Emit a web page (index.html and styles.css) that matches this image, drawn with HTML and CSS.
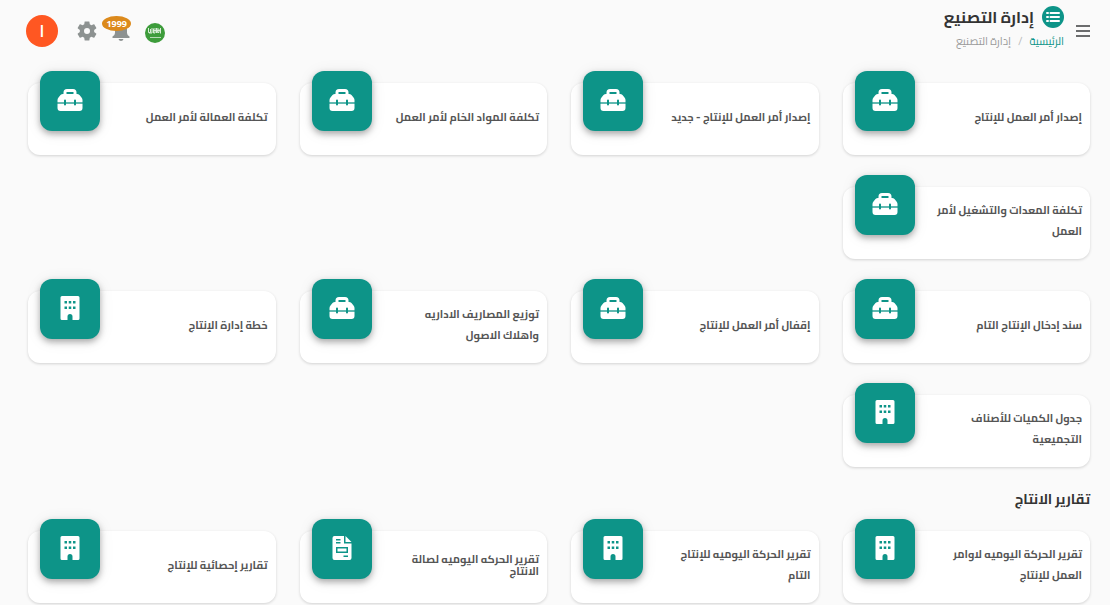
FILE: index.html
```html
<!DOCTYPE html>
<html lang="ar" dir="rtl">
<head>
    <meta charset="UTF-8">
    <meta name="viewport" content="width=device-width, initial-scale=1.0">
    <title>إدارة التصنيع</title>
    <link rel="stylesheet" href="styles.css">
</head>
<body>

<!-- shared icons -->
<svg class="sprite" aria-hidden="true">
    <symbol id="icon-toolbox" viewBox="0 0 26 24">
        <path fill="#fff" fill-rule="evenodd" d="M6.500 6V4.500Q6.500 1 10 1h6q3.500 0 3.500 3.500V6h.5q1.500 0 2.500 1l2 2.500q1 1 1 2.500v2H19v-1.500q0-1-1-1t-1 1V14H9v-1.500q0-1-1-1t-1 1V14H.5v-2q0-1.500 1-2.500l2-2.500q1-1 2.500-1zM9.500 6h7V4h-7z"/>
        <path fill="#fff" d="M.5 16H7v.5q0 1 1 1t1-1V16h8v.5q0 1 1 1t1-1V16h6.500v4q0 3-3 3h-19q-3 0-3-3z"/>
        <path fill="#fff" opacity=".35" d="M.5 14H7v2H.5zM9 14h8v2H9zM19 14h6.500v2H19z"/>
    </symbol>
    <symbol id="icon-building" viewBox="0 0 20 24">
        <path fill="#fff" fill-rule="evenodd" d="M2 0h16q1.500 0 1.500 1.500v21q0 1.500-1.500 1.500h-5.500v-3.500q0-2.500-2.500-2.500t-2.500 2.500V24H2Q.5 24 .5 22.500v-21Q.5 0 2 0zM4.500 5v2.500H7V5zm4.250 0v2.500h2.500V5zM13 5v2.500h2.500V5zM4.500 10.500V13H7v-2.500zm4.250 0V13h2.500v-2.500zm4.250 0V13h2.500v-2.500z"/>
    </symbol>
    <symbol id="icon-invoice" viewBox="0 0 20 24">
        <path fill="#fff" fill-rule="evenodd" d="M2.500 0H12v7.500h7.500V22q0 2-2 2h-15q-2 0-2-2V2q0-2 2-2zM4 3v1.500h4.500V3zm0 3v1.500h4.500V6zm0 5v6h12v-6zm1.500 1.500h9v3h-9zm6 7V21H16v-1.500z"/>
        <path fill="#fff" d="M13.500 0l6 6h-6z"/>
    </symbol>
</svg>

<header class="topbar">
    <div class="topbar-start">
        <button type="button" class="icon-button menu-button" aria-label="القائمة">
            <svg width="14" height="12" viewBox="0 0 14 12"><path d="M0 1h14M0 6h14M0 11h14" stroke="#6b6c6d" stroke-width="2"/></svg>
        </button>
        <div class="page-heading">
            <div class="title-row">
                <svg width="22" height="22" viewBox="0 0 22 22" aria-hidden="true">
                    <circle cx="11" cy="11" r="11" fill="#0d9488"/>
                    <path d="M8.500 7h8.500M8.500 11h8.500M8.500 15h8.500" stroke="#fff" stroke-width="2" stroke-linecap="round"/>
                    <path d="M5 7h1M5 11h1M5 15h1" stroke="#fff" stroke-width="2" stroke-linecap="round"/>
                </svg>
                <h1>إدارة التصنيع</h1>
            </div>
            <nav class="breadcrumb">
                <a href="#">الرئيسية</a>
                <span class="separator">/</span>
                <span>إدارة التصنيع</span>
            </nav>
        </div>
    </div>

    <div class="topbar-tools">
        <button type="button" class="icon-button flag-button" aria-label="اللغة">
            <svg width="20" height="20" viewBox="0 0 20 20">
                <circle cx="10" cy="10" r="10" fill="#3d9c3b"/>
                <path d="M3.500 5v4.500h2V6M7 5v5H4M8.500 5.500V10H10V5M11.500 5v5M13 5l-.5 4.500H14V6M15.500 5v5.500M8 7.500h7" fill="none" stroke="#d8ecd7" stroke-width="1"/>
                <path d="M5 14.500h11" stroke="#b5dab4" stroke-width="1"/>
            </svg>
        </button>
        <button type="button" class="icon-button bell-button" aria-label="الإشعارات">
            <svg width="18" height="20" viewBox="0 0 18 20">
                <path fill="#8d9291" d="M9 0q1.200 0 1.200 1.500Q15 3 15 8v4q0 2 2.500 3.500V17H.5v-1.500Q3 14 3 12V8q0-5 4.800-6.500Q7.800 0 9 0zM6.500 18h5q-.5 2-2.500 2t-2.500-2z"/>
            </svg>
            <span class="badge">1999</span>
        </button>
        <button type="button" class="icon-button settings-button" aria-label="الإعدادات">
            <svg width="20" height="20" viewBox="2 2 20 20">
                <path fill="#8d9291" d="M19.140 12.940c.04-.3.060-.61.060-.94 0-.32-.02-.64-.07-.94l2.030-1.580c.18-.14.23-.41.120-.61l-1.920-3.320c-.12-.22-.37-.29-.59-.22l-2.390.960c-.5-.38-1.030-.7-1.620-.94l-.36-2.540c-.04-.24-.24-.41-.48-.41h-3.840c-.24 0-.43.170-.47.410l-.36 2.540c-.59.240-1.130.570-1.620.940l-2.390-.96c-.22-.08-.47 0-.59.220L2.740 8.870c-.12.210-.08.470.120.610l2.030 1.580c-.05.300-.09.630-.09.940s.02.640.070.940l-2.030 1.580c-.18.140-.23.410-.12.610l1.920 3.320c.12.220.370.290.590.220l2.390-.96c.5.380 1.030.7 1.620.940l.36 2.540c.05.240.240.410.480.410h3.840c.24 0 .44-.17.470-.41l.36-2.540c.59-.24 1.130-.56 1.620-.94l2.390.960c.22.080.470 0 .59-.22l1.920-3.320c.12-.22.070-.47-.12-.61l-2.010-1.580zM12 15a3 3 0 1 1 0-6 3 3 0 0 1 0 6z"/>
            </svg>
        </button>
        <button type="button" class="avatar">I</button>
    </div>
</header>

<main class="content">
    <div class="card-grid">
        <a href="#" class="card">
            <span class="card-label">إصدار أمر العمل للإنتاج</span>
            <span class="card-icon"><svg width="26" height="24"><use href="#icon-toolbox"/></svg></span>
        </a>
        <a href="#" class="card">
            <span class="card-label">إصدار أمر العمل للإنتاج - جديد</span>
            <span class="card-icon"><svg width="26" height="24"><use href="#icon-toolbox"/></svg></span>
        </a>
        <a href="#" class="card">
            <span class="card-label">تكلفة المواد الخام لأمر العمل</span>
            <span class="card-icon"><svg width="26" height="24"><use href="#icon-toolbox"/></svg></span>
        </a>
        <a href="#" class="card">
            <span class="card-label">تكلفة العمالة لأمر العمل</span>
            <span class="card-icon"><svg width="26" height="24"><use href="#icon-toolbox"/></svg></span>
        </a>
        <a href="#" class="card">
            <span class="card-label">تكلفة المعدات والتشغيل لأمر<br>العمل</span>
            <span class="card-icon"><svg width="26" height="24"><use href="#icon-toolbox"/></svg></span>
        </a>
    </div>

    <div class="card-grid">
        <a href="#" class="card">
            <span class="card-label">سند إدخال الإنتاج التام</span>
            <span class="card-icon"><svg width="26" height="24"><use href="#icon-toolbox"/></svg></span>
        </a>
        <a href="#" class="card">
            <span class="card-label">إقفال أمر العمل للإنتاج</span>
            <span class="card-icon"><svg width="26" height="24"><use href="#icon-toolbox"/></svg></span>
        </a>
        <a href="#" class="card">
            <span class="card-label">توزيع المصاريف الاداريه<br>واهلاك الاصول</span>
            <span class="card-icon"><svg width="26" height="24"><use href="#icon-toolbox"/></svg></span>
        </a>
        <a href="#" class="card">
            <span class="card-label">خطة إدارة الإنتاج</span>
            <span class="card-icon"><svg width="20" height="24"><use href="#icon-building"/></svg></span>
        </a>
        <a href="#" class="card">
            <span class="card-label">جدول الكميات للأصناف<br>التجميعية</span>
            <span class="card-icon"><svg width="20" height="24"><use href="#icon-building"/></svg></span>
        </a>
    </div>

    <h2>تقارير الانتاج</h2>
    <div class="card-grid">
        <a href="#" class="card">
            <span class="card-label">تقرير الحركة اليوميه لاوامر<br>العمل للإنتاج</span>
            <span class="card-icon"><svg width="20" height="24"><use href="#icon-building"/></svg></span>
        </a>
        <a href="#" class="card">
            <span class="card-label">تقرير الحركة اليوميه للإنتاج<br>التام</span>
            <span class="card-icon"><svg width="20" height="24"><use href="#icon-building"/></svg></span>
        </a>
        <a href="#" class="card">
            <span class="card-label compact">تقرير الحركه اليوميه لصالة<br>الانتاج</span>
            <span class="card-icon"><svg width="20" height="24"><use href="#icon-invoice"/></svg></span>
        </a>
        <a href="#" class="card">
            <span class="card-label">تقارير إحصائية للإنتاج</span>
            <span class="card-icon"><svg width="20" height="24"><use href="#icon-building"/></svg></span>
        </a>
    </div>
</main>

</body>
</html>
```
FILE: styles.css
```css
* {
    box-sizing: border-box;
}

body {
    margin: 0;
    background-color: #fafafa;
    color: #333;
    font-family: Cairo, "DejaVu Sans", sans-serif;
    overflow: hidden;
}

.sprite {
    display: none;
}

svg {
    display: block;
}

/* top bar */
.topbar {
    display: flex;
    justify-content: space-between;
    align-items: center;
    padding: 4px 20px 0 26px;
}

.topbar-start {
    display: flex;
    align-items: center;
    gap: 12px;
}

.icon-button {
    padding: 0;
    border: none;
    background: none;
    cursor: pointer;
}

.menu-button {
    padding-top: 4px;
}

.title-row {
    display: flex;
    align-items: center;
    gap: 8px;
    height: 25px;
}

h1 {
    margin: 0;
    font-size: 16px;
    line-height: 24px;
    color: #333;
}

.breadcrumb {
    display: flex;
    gap: 7px;
    font-size: 11px;
    line-height: 24px;
    color: #999;
}

.breadcrumb a {
    color: #0d9488;
    text-decoration: none;
}

.separator {
    color: #bbb;
}

.topbar-tools {
    display: flex;
    align-items: center;
    gap: 15px;
    padding-top: 4px;
}

.flag-button {
    padding-top: 4px;
}

.bell-button {
    position: relative;
}

.badge {
    position: absolute;
    top: -5px;
    right: -1px;
    padding: 0 4px;
    border-radius: 50%;
    background-color: #dc8a1c;
    color: #fff;
    font-family: "Open Sans", sans-serif;
    font-size: 9px;
    font-weight: 700;
    line-height: 15px;
}

.avatar {
    width: 32px;
    height: 32px;
    margin-right: 4px;
    padding: 0;
    border: none;
    border-radius: 50%;
    background-color: #ff5722;
    color: #fff;
    font-family: "Open Sans", sans-serif;
    font-size: 16px;
    font-weight: 600;
    cursor: pointer;
}

/* cards */
.content {
    padding: 30px 20px 0 28px;
}

.card-grid {
    display: grid;
    grid-template-columns: repeat(4, 1fr);
    gap: 32px 24px;
    margin-bottom: 32px;
}

.card {
    display: flex;
    justify-content: space-between;
    align-items: center;
    height: 72px;
    padding: 0 8px 0 12px;
    border-radius: 12px;
    background-color: #fff;
    box-shadow: 0 1px 3px rgba(0, 0, 0, 0.16);
    color: #555;
    text-decoration: none;
}

.card-label {
    padding-bottom: 4px;
    font-size: 11px;
    font-weight: 700;
    line-height: 21px;
    white-space: nowrap;
}

.compact {
    line-height: 12px;
}

.card-icon {
    display: flex;
    justify-content: center;
    align-items: center;
    align-self: flex-start;
    flex-shrink: 0;
    width: 60px;
    height: 60px;
    margin-top: -12px;
    padding-bottom: 2px;
    border-radius: 12px;
    background-color: #0d9488;
    box-shadow: 0 3px 6px rgba(0, 0, 0, 0.3), 0 2px 16px rgba(0, 0, 0, 0.08);
}

h2 {
    margin: 0 0 20px;
    font-size: 14px;
    line-height: 24px;
    color: #333;
}

.card-grid + h2 {
    margin-top: -12px;
}
```
